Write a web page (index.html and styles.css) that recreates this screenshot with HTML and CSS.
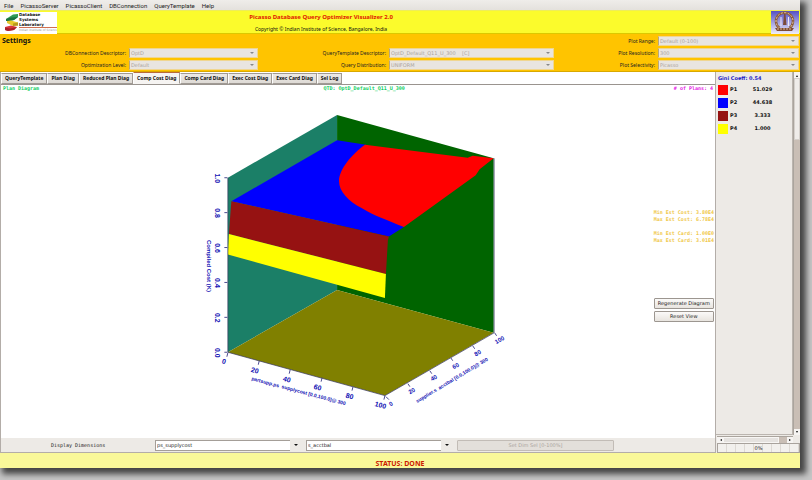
FILE: index.html
```html
<!DOCTYPE html>
<html lang="en">
<head>
<meta charset="utf-8">
<title>Picasso Database Query Optimizer Visualizer</title>
<link rel="stylesheet" href="styles.css">
</head>
<body>
<div class="window">
  <nav class="menubar">
    <button>File</button><button>PicassoServer</button><button>PicassoClient</button><button>DBConnection</button><button>QueryTemplate</button><button>Help</button>
  </nav>

  <header class="banner">
    <div class="lab">
      <svg class="lab-mark" viewBox="0 0 14 18" aria-hidden="true">
        <path d="M1 6 8 1.500 13 1v3L9 7 4 8H1z" fill="#2f9a55"/>
        <path d="M1 6 6 4.500 13 4 9 7 4 8H1z" fill="#1c7440"/>
        <path d="M2 8 6 7.500 13 9.500v3L8 13 2 10z" fill="#e8c92c"/>
        <path d="M8 10.500 13 9.500v3L8 13z" fill="#b89a20"/>
        <path d="M0 14 6 12.500 12 14 9 17 3 18 0 17z" fill="#d8343c"/>
        <path d="M0 14.500 5 15.500 12 14 9 17 3 18 0 17z" fill="#a91f29"/>
      </svg>
      <div class="lab-text">
        <b>Database</b><b>Systems</b><b>Laboratory</b>
        <span>Indian Institute of Science</span>
      </div>
    </div>
    <div class="banner-text">
      <h1>Picasso Database Query Optimizer Visualizer 2.0</h1>
      <p>Copyright © Indian Institute of Science, Bangalore, India</p>
    </div>
    <svg class="emblem" viewBox="0 0 28 23" aria-hidden="true">
      <defs><linearGradient id="sky" x1="0" y1="0" x2="0" y2="1"><stop offset="0" stop-color="#5450c4"/><stop offset=".55" stop-color="#a9a8e4"/><stop offset="1" stop-color="#f0eef8"/></linearGradient></defs>
      <rect width="28" height="23" fill="url(#sky)"/>
      <path d="M8.500 17A8.500 8.500 0 1 1 18.500 17" fill="none" stroke="#8b5a3b" stroke-width="2.500"/>
      <path d="M8.500 17A8.500 8.500 0 1 1 18.500 17" fill="none" stroke="#e6cfae" stroke-width="1" stroke-dasharray="2 1.500"/>
      <path d="M13 3h1.500l1 11h-3.500z" fill="#7b4a3a"/>
      <path d="M10 6v9M17.500 6v9" stroke="#f2eaf2"/>
      <path d="M4 17h19l-2 3H6z" fill="#7c4b37"/>
      <path d="M6 18h15" stroke="#dcb994" stroke-dasharray="2 1"/>
    </svg>
  </header>

  <section class="settings">
    <h2>Settings</h2>
    <div class="fields fields-a">
      <label for="conn">DBConnection Descriptor:</label>
      <select id="conn" disabled><option>OptD</option></select>
      <label for="opt">Optimization Level:</label>
      <select id="opt" disabled><option>Default</option></select>
    </div>
    <div class="fields fields-b">
      <label for="qt">QueryTemplate Descriptor:</label>
      <select id="qt" disabled><option>OptD_Default_Q11_U_300 &nbsp; &nbsp;[C]</option></select>
      <label for="dist">Query Distribution:</label>
      <select id="dist" disabled><option>UNIFORM</option></select>
    </div>
    <div class="fields fields-c">
      <label for="range">Plot Range:</label>
      <select id="range" disabled><option>Default (0-100)</option></select>
      <label for="res">Plot Resolution:</label>
      <select id="res" disabled><option>300</option></select>
      <label for="sel">Plot Selectivity:</label>
      <select id="sel" disabled><option>Picasso</option></select>
    </div>
  </section>

  <div class="work">
    <main class="main">
      <div class="tabs" role="tablist">
        <button role="tab">QueryTemplate</button><button role="tab">Plan Diag</button><button role="tab">Reduced Plan Diag</button><button role="tab" class="active" aria-selected="true">Comp Cost Diag</button><button role="tab">Comp Card Diag</button><button role="tab">Exec Cost Diag</button><button role="tab">Exec Card Diag</button><button role="tab">Sel Log</button>
      </div>
      <div class="canvas">
        <svg class="plot" viewBox="0 85 716 353" role="img" aria-label="Compiled cost diagram">
          <path d="M337 114.500 227.500 177.500V352.500L337 290z" fill="#1b7f67"/>
          <path d="M337 114.500 494 158V333L337 290z" fill="#006400"/>
          <path d="M227.500 352.500 337 290 494 333 385 396z" fill="#808000"/>
          <path d="M337 140 366 144.500 404 227 389 236.500 231 201z" fill="#00f"/>
          <path d="M365 144.500 468 157.500 473 155.500 494 158 480 169 476 175 404 227C386 219 375 216 362 208 348 201 339 191 339 181 339 169 352 154 365 144.500z" fill="#f00"/>
          <path d="M231 201 389 236.500 388 240 386 274 228.500 234z" fill="#961212"/>
          <path d="M228.500 234 386 274 385 298 227.500 254.500z" fill="#ff0"/>
          <path d="M494.500 158V333L385 396 227.500 352.500V177.500" class="edge"/>
          <path class="tick" d="M224 177.500h3M224 212.500h3M224 247.500h3M224 282.500h3M224 317.500h3M224 352.500h3M227.500 353l-1 4M259 361l-1 4M290 370l-1 4M322 378l-1 4M353 387l-1 4M385 396l-1 4M386 397l3 3M408 384l2 3M430 371l2 3M451 358l2 3M473 346l2 3M495 333l2 3"/>
          <g class="axis">
            <text transform="translate(215 178) rotate(90)">1.0</text>
            <text transform="translate(215 213) rotate(90)">0.8</text>
            <text transform="translate(215 248) rotate(90)">0.6</text>
            <text transform="translate(215 283) rotate(90)">0.4</text>
            <text transform="translate(215 318) rotate(90)">0.2</text>
            <text transform="translate(215 353) rotate(90)">0.0</text>
            <text transform="translate(223 364) rotate(15)">0</text>
            <text transform="translate(254 373) rotate(15)">20</text>
            <text transform="translate(286 382) rotate(15)">40</text>
            <text transform="translate(317 390) rotate(15)">60</text>
            <text transform="translate(349 399) rotate(15)">80</text>
            <text transform="translate(380 408) rotate(15)">100</text>
          </g>
          <g class="axis axis-small">
            <text transform="translate(207 266) rotate(90)">Compiled Cost (K)</text>
            <text transform="translate(392 406) rotate(-30)">0</text>
            <text transform="translate(413 393) rotate(-30)">20</text>
            <text transform="translate(435 380) rotate(-30)">40</text>
            <text transform="translate(457 368) rotate(-30)">60</text>
            <text transform="translate(479 355) rotate(-30)">80</text>
            <text transform="translate(501 342) rotate(-30)">100</text>
          </g>
          <g class="axis axis-title">
            <text transform="translate(298 393) rotate(15)">partsupp.ps_supplycost [0.0,100.0]@ 300</text>
            <text transform="translate(453 382) rotate(-31)">supplier.s_acctbal [0.0,100.0]@ 300</text>
          </g>
        </svg>
        <div class="captions"><span class="green">Plan Diagram</span><span class="green">QTD: OptD_Default_Q11_U_300</span><span class="magenta"># of Plans: 4</span></div>
        <div class="side-notes">
          <p>Min Est Cost: 3.80E4<br>Max Est Cost: 6.78E4</p>
          <p>Min Est Card: 1.00E0<br>Max Est Card: 3.01E4</p>
          <div class="actions">
            <button>Regenerate Diagram</button>
            <button>Reset View</button>
          </div>
        </div>
      </div>
      <div class="dims">
        <span class="dims-label" id="dims">Display Dimensions</span>
        <select class="combo" aria-labelledby="dims"><option>ps_supplycost</option></select>
        <select class="combo" aria-labelledby="dims"><option>s_acctbal</option></select>
        <button disabled>Set Dim Sel [0-100%]</button>
      </div>
    </main>

    <aside class="legend">
      <div class="legend-body">
        <div class="legend-list">
          <h3>Gini Coeff: 0.54</h3>
          <table>
            <tr><td><i class="p1"></i></td><th>P1</th><td>51.029</td></tr>
            <tr><td><i class="p2"></i></td><th>P2</th><td>44.638</td></tr>
            <tr><td><i class="p3"></i></td><th>P3</th><td>3.333</td></tr>
            <tr><td><i class="p4"></i></td><th>P4</th><td>1.000</td></tr>
          </table>
        </div>
        <div class="vbar"><i class="arrow up"></i><i class="thumb"></i><i class="arrow down"></i></div>
      </div>
      <div class="hbar"><i class="arrow left"></i><i class="thumb"></i><i class="arrow right"></i></div>
      <div class="progress">0%</div>
    </aside>
  </div>

  <footer class="status">STATUS: DONE</footer>
</div>
</body>
</html>
```
FILE: styles.css
```css
* { box-sizing: border-box; }

body {
  margin: 0;
  height: 100vh;
  padding: 0 12px 12px 0;
  display: flex;
  overflow: hidden;
  background: #c6c6c6;
  font: 5px/7px "DejaVu Sans", sans-serif;
  color: #222;
}

h1, h2, h3, p { margin: 0; font-size: inherit; }

button, select {
  appearance: none;
  margin: 0;
  padding: 0;
  border: 0;
  border-radius: 0;
  background: none;
  color: inherit;
  font: inherit;
  opacity: 1;
}

.window {
  flex: 1;
  min-width: 0;
  display: flex;
  flex-direction: column;
  background: #edeae6;
  box-shadow: 4px 4px 6px 2px #444;
}

.menubar {
  height: 10px;
  display: flex;
  gap: 7px;
  padding: 1px 4px 0;
  background: linear-gradient(#efedea, #e4e1dd);
  font: 6px/8px Roboto, sans-serif;
}

.banner {
  height: 24px;
  display: grid;
  grid-template-columns: 57px 1fr 215px;
  border-top: 1px solid #eded5a;
  border-bottom: 1px solid #dcc800;
  background: #fbfb2c;
}

.lab {
  margin: 1px 0 0;
  display: flex;
  overflow: hidden;
  background: #fff;
}

.lab-mark { flex: none; width: 14px; height: 18px; margin: 1px 0 0 5px; }
.lab-text { display: flex; flex-direction: column; }
.lab-text b { color: #111; font-size: 4px; line-height: 5px; }
.lab-text span { border-top: 1px solid #d07050; color: #999; font-size: 3px; line-height: 5px; white-space: nowrap; }

.banner-text { text-align: center; line-height: 12px; }
.banner-text h1 { color: #e01800; font: bold 6px/12px "Noto Sans", sans-serif; }
.banner-text p { font-family: "Noto Sans", sans-serif; color: #111; }
.emblem { width: 28px; height: 23px; justify-self: end; margin-right: 1px; }

.settings {
  height: 38px;
  display: flex;
  align-items: flex-end;
  justify-content: space-between;
  padding: 0 1px;
  border-bottom: 1px solid #d9a900;
  background: #ffc400;
  font: 5px/7px "Noto Sans", sans-serif;
}

.settings h2 { align-self: flex-start; width: 30px; padding: 2px 0 0 1px; font: bold 7px/10px "Noto Sans", sans-serif; color: #111; }
.fields { display: grid; grid-auto-rows: 12px; align-items: center; column-gap: 3px; }
.fields-a { grid-template-columns: 95px 129px; }
.fields-b { grid-template-columns: 100px 165px; margin-left: 28px; }
.fields-c { grid-template-columns: 100px 141px; margin-left: auto; }
.fields label { text-align: right; }

select {
  background: url("data:image/svg+xml,%3Csvg xmlns='http://www.w3.org/2000/svg' width='4' height='3'%3E%3Cpath d='M0 0h4L2 2z' fill='%23888'/%3E%3C/svg%3E") no-repeat right 3px center #e9e5e0;
}

.fields select {
  height: 10px;
  padding: 0 12px 0 1px;
  border: 1px solid #f0d690;
  border-left-color: #b9a77c;
  color: #aaa49d;
  font: 5px/8px "DejaVu Sans", sans-serif;
}

.work { flex: 1; min-height: 0; display: flex; }
.main { flex: 1; min-width: 0; display: flex; flex-direction: column; border: solid #b3ada8; border-width: 0 1px 1px 1px; }

.tabs {
  height: 13px;
  display: flex;
  align-items: flex-end;
  border-bottom: 1px solid #9a948f;
  background: #fff;
}

.tabs button {
  height: 11px;
  padding: 0 3px;
  border: 1px solid #a09a94;
  border-left-color: #fff;
  background: linear-gradient(#ece9e5, #dedad5);
  font: bold 5px/9px "Noto Sans", sans-serif;
  color: #111;
}

.tabs .active { height: 12px; border-top-color: #b86a3a; border-bottom-color: #f6f4f2; background: #f6f4f2; }

.canvas { flex: 1; min-height: 0; position: relative; background: #fff; }
.plot { display: block; width: 100%; height: 100%; }
.edge { fill: none; stroke: #35355f; stroke-width: 1; stroke-opacity: .7; }
.tick { fill: none; stroke: #4a4a90; stroke-width: 1; }
.axis { fill: #1111b4; font: bold 7px "Liberation Sans", sans-serif; text-anchor: middle; }
.axis-small { font-size: 6px; }
.axis-title { font-size: 5px; }

.captions {
  position: absolute;
  inset: 0 0 auto;
  display: grid;
  grid-template-columns: 26fr auto 25fr;
  padding: 0 2px;
  font: bold 5px/7px "DejaVu Sans Mono", monospace;
}

.captions .green { color: #12cf62; }
.captions .magenta { color: #e41be4; text-align: right; }

.side-notes {
  position: absolute;
  right: 1px;
  top: 35%;
  font: bold 5px/7px "DejaVu Sans Mono", monospace;
  color: #f0c84a;
}

.side-notes p { margin-bottom: 7px; }
.actions { display: grid; gap: 2px; margin-top: 54px; }

.actions button, .dims button {
  height: 11px;
  border: 1px solid #9c9690;
  border-radius: 1px;
  background: linear-gradient(#fbfaf9, #e8e4df);
  color: #222;
  font: 5px/9px "DejaVu Sans", sans-serif;
}

.actions button { width: 60px; }

.dims {
  height: 14px;
  display: flex;
  align-items: center;
  padding-left: 50px;
  background: #edeae6;
}

.dims-label { width: 104px; font: 5px/7px "DejaVu Sans Mono", monospace; }

.combo {
  width: 145px;
  height: 11px;
  margin-right: 6px;
  padding: 0 0 0 2px;
  background:
    url("data:image/svg+xml,%3Csvg xmlns='http://www.w3.org/2000/svg' width='4' height='3'%3E%3Cpath d='M0 0h4L2 2z' fill='%23111'/%3E%3C/svg%3E") no-repeat right 2px center,
    linear-gradient(#a49e98, #a49e98) no-repeat 0 0 / 135px 1px,
    linear-gradient(#a49e98, #a49e98) no-repeat 0 100% / 135px 1px,
    linear-gradient(#a49e98, #a49e98) no-repeat 0 0 / 1px 100%,
    linear-gradient(#fff, #fff) no-repeat 0 0 / 135px 100%;
}

.dims button { width: 157px; border-color: #c2bcb6; background: #e3dfda; color: #aaa49d; }

.legend { width: 84px; display: flex; flex-direction: column; }
.legend-body { flex: 1; min-height: 0; display: flex; }
.legend-list { flex: 1; border-right: 1px solid #bbb5af; border-bottom: 1px solid #bbb5af; padding: 2px 0 0 2px; }
.legend h3 { color: #1d22c4; font: bold 5px/9px "DejaVu Sans", sans-serif; }
.legend table { border-spacing: 0; font: bold 5px/7px "DejaVu Sans", sans-serif; color: #111; }
.legend td, .legend th { height: 13px; padding: 0; text-align: left; }
.legend th { width: 22px; padding-left: 2px; }
.legend td:last-child { width: 25px; text-align: center; }
.legend td i { display: block; width: 10px; height: 10px; }
.p1 { background: #f00; }
.p2 { background: #00f; }
.p3 { background: #961212; }
.p4 { background: #ff0; }

.vbar { width: 7px; display: flex; flex-direction: column; background: #c9beb5; border-left: 1px solid #aaa49d; }
.vbar .thumb { height: 62px; background: #efece9; border: 1px solid #d5d0cb; }
.vbar .down { margin-top: auto; }
.hbar { height: 7px; margin: 1px 7px 0 1px; display: flex; background: #c9beb5; border: solid #aaa49d; border-width: 1px 0 0; }
.hbar .thumb { width: 56px; background: #e5e2df; border: 1px solid #f8f6f4; }
.hbar .right { margin-left: auto; }

.arrow { flex: none; width: 6px; height: 6px; display: grid; place-items: center; background: #f6f4f2; }
.arrow::before { content: ""; border: 1px solid transparent; }
.up::before { border-bottom: 2px solid #111; }
.down::before { border-top: 2px solid #111; }
.left::before { border-right: 2px solid #111; }
.right::before { border-left: 2px solid #111; }

.progress {
  height: 10px;
  margin-left: 1px;
  border: 1px solid #a8a29c;
  background: repeating-linear-gradient(90deg, #f2f0ed 0 8px, #ddd9d4 8px 9px);
  text-align: center;
  line-height: 8px;
}

.status {
  height: 15px;
  padding-top: 3px;
  background: #f9f899;
  color: #cc1a00;
  text-align: center;
  font: bold 7px/15px "Noto Sans", sans-serif;
}
```
